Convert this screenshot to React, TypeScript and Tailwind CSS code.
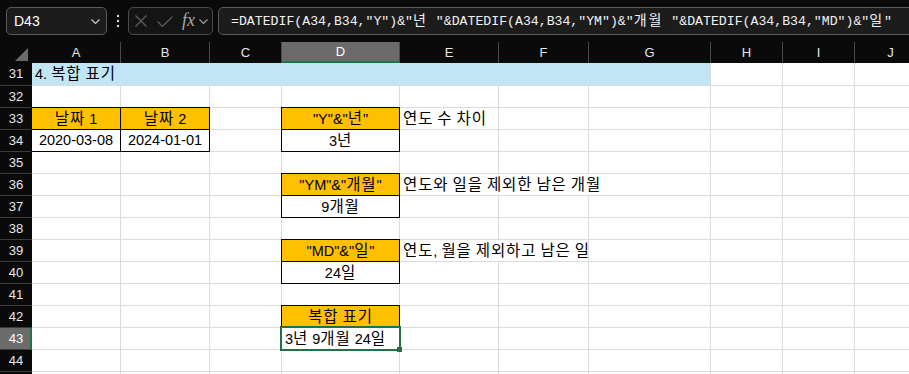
import React from "react";

type Cell = {
  col: number;
  span?: number;
  w?: string;
  text?: string;
  center?: boolean;
  fill?: string;
  boxed?: boolean;
  selected?: boolean;
};

type Row = { n: number; h?: string; label?: boolean; cells: Cell[] };

const cols = [
  { name: "A", w: "w-[89px]" },
  { name: "B", w: "w-[89px]" },
  { name: "C", w: "w-[72px]" },
  { name: "D", w: "w-[118px]" },
  { name: "E", w: "w-[99px]" },
  { name: "F", w: "w-[90px]" },
  { name: "G", w: "w-[122px]" },
  { name: "H", w: "w-[72px]" },
  { name: "I", w: "w-[72px]" },
  { name: "J", w: "w-[72px]" },
];

const orange = "bg-[#ffc000]";

const rows: Row[] = [
  {
    n: 31,
    h: "h-[23px]",
    cells: [{ col: 0, span: 7, w: "w-[679px]", text: "4. 복합 표기", fill: "bg-[#c1e5f5]" }],
  },
  { n: 32, cells: [] },
  {
    n: 33,
    cells: [
      { col: 0, text: "날짜 1", center: true, fill: orange, boxed: true },
      { col: 1, text: "날짜 2", center: true, fill: orange, boxed: true },
      { col: 3, text: '"Y"&"년"', center: true, fill: orange, boxed: true },
      { col: 4, text: "연도 수 차이" },
    ],
  },
  {
    n: 34,
    cells: [
      { col: 0, text: "2020-03-08", center: true, boxed: true },
      { col: 1, text: "2024-01-01", center: true, boxed: true },
      { col: 3, text: "3년", center: true, boxed: true },
    ],
  },
  { n: 35, cells: [] },
  {
    n: 36,
    cells: [
      { col: 3, text: '"YM"&"개월"', center: true, fill: orange, boxed: true },
      { col: 4, span: 3, w: "w-[311px]", text: "연도와 일을 제외한 남은 개월" },
    ],
  },
  { n: 37, cells: [{ col: 3, text: "9개월", center: true, boxed: true }] },
  { n: 38, cells: [] },
  {
    n: 39,
    cells: [
      { col: 3, text: '"MD"&"일"', center: true, fill: orange, boxed: true },
      { col: 4, span: 2, w: "w-[189px]", text: "연도, 월을 제외하고 남은 일" },
    ],
  },
  { n: 40, cells: [{ col: 3, text: "24일", center: true, boxed: true }] },
  { n: 41, cells: [] },
  { n: 42, cells: [{ col: 3, text: "복합 표기", center: true, fill: orange, boxed: true }] },
  { n: 43, cells: [{ col: 3, text: "3년 9개월 24일", selected: true }] },
  { n: 44, cells: [] },
  { n: 45, label: false, cells: [] },
];

const formula =
  '=DATEDIF(A34,B34,"Y")&"년 "&DATEDIF(A34,B34,"YM")&"개월 "&DATEDIF(A34,B34,"MD")&"일"';

// hangul runs get their own size so they take the room malgun gothic gives them
function Ko({ text, cls }: { text: string; cls: string }) {
  return (
    <span>
      {text.split(/([\uac00-\ud7a3]+)/).map((p, i) =>
        /[\uac00-\ud7a3]/.test(p) ? (
          <span key={i} className={cls}>
            {p}
          </span>
        ) : (
          p
        )
      )}
    </span>
  );
}

function Chevron({ color }: { color: string }) {
  return (
    <svg width="9" height="5" viewBox="0 0 9 5" fill="none">
      <polyline points="0.5,0.5 4.5,4.5 8.5,0.5" stroke={color} strokeWidth="1.1" />
    </svg>
  );
}

function TopBar() {
  return (
    <div className="h-[42px] flex items-start pt-[7px] bg-[#0a0a0a] shrink-0">
      {/* Name box */}
      <div className="ml-[6px] w-[101px] h-[28px] shrink-0 rounded-[5px] border border-[#5a5a5a] bg-[#1c1c1c] flex items-center justify-between pl-[7px] pr-[6px]">
        <span className="text-[14px] text-white font-['Liberation_Sans',sans-serif]">D43</span>
        <Chevron color="#cfcfcf" />
      </div>

      {/* dots */}
      <div className="ml-[9px] w-[4px] h-[28px] flex items-center shrink-0">
        <svg width="4" height="14" viewBox="0 0 4 14">
          <circle cx="2" cy="2" r="1.2" fill="#d6d6d6" />
          <circle cx="2" cy="7" r="1.2" fill="#d6d6d6" />
          <circle cx="2" cy="12" r="1.2" fill="#d6d6d6" />
        </svg>
      </div>

      {/* cancel / enter / fx */}
      <div className="ml-[8px] w-[85px] h-[28px] shrink-0 rounded-[5px] border border-[#4a4a4a] bg-[#141414] flex items-center pl-[6px]">
        <svg width="12" height="12" viewBox="0 0 12 12" fill="none">
          <line x1="0.5" y1="0.5" x2="11.5" y2="11.5" stroke="#5e5e5e" strokeWidth="1.2" />
          <line x1="11.5" y1="0.5" x2="0.5" y2="11.5" stroke="#5e5e5e" strokeWidth="1.2" />
        </svg>
        <svg className="ml-[10px]" width="16" height="11" viewBox="0 0 16 11" fill="none">
          <polyline points="0.5,5.5 5.5,10.5 15.5,0.5" stroke="#5e5e5e" strokeWidth="1.2" />
        </svg>
        <span className="ml-[9px] italic text-[18px] leading-none text-[#a8a8a8] font-['Liberation_Serif',serif] pb-[2px]">
          fx
        </span>
        <span className="ml-[4px] flex">
          <Chevron color="#a0a0a0" />
        </span>
      </div>

      {/* formula */}
      <div className="ml-[5px] w-[720px] h-[28px] shrink-0 rounded-[5px] border border-[#5a5a5a] bg-[#1c1c1c] flex items-center pl-[12px]">
        <span className="whitespace-nowrap text-[13.2px] text-[#f2f2f2] font-['Liberation_Mono','Noto_Sans_CJK_KR',monospace]">
          <Ko text={formula} cls="text-[14px] tracking-[2px]" />
        </span>
      </div>
    </div>
  );
}

function ColumnHeader() {
  return (
    <div className="flex h-[21px] shrink-0 bg-[#0a0a0a]">
      <div className="w-[32px] shrink-0 h-full flex items-end justify-end pr-[4px] pb-[2px]">
        <svg width="13" height="13" viewBox="0 0 13 13">
          <polygon points="13,0 13,13 0,13" fill="#6b6b6b" />
        </svg>
      </div>
      {cols.map((c) =>
        c.name === "D" ? (
          <div
            key={c.name}
            className={`${c.w} shrink-0 h-full bg-[#6b6b6b] border-b-2 border-b-[#217346] border-r border-r-[#4a4a4a] flex items-center justify-center text-[13px] text-white font-['Liberation_Sans',sans-serif]`}
          >
            {c.name}
          </div>
        ) : (
          <div
            key={c.name}
            className={`${c.w} shrink-0 h-full border-r border-[#4a4a4a] flex items-center justify-center text-[13px] text-[#e6e6e6] font-['Liberation_Sans',sans-serif]`}
          >
            {c.name}
          </div>
        )
      )}
    </div>
  );
}

function GridCell({ cell }: { cell: Cell }) {
  const w = cell.w ?? cols[cell.col].w;
  let edge = "border-[#dcdcdc]";
  if (cell.boxed) edge = "border-black shadow-[0_-1px_0_0_#000,-1px_0_0_0_#000,-1px_-1px_0_0_#000]";
  if (cell.selected)
    edge =
      "border-[#217346] relative z-10 shadow-[-2px_-2px_0_0_#217346,0_-2px_0_0_#217346,-2px_0_0_0_#217346,1px_1px_0_0_#217346,1px_0_0_0_#217346,0_1px_0_0_#217346,1px_-2px_0_0_#217346,-2px_1px_0_0_#217346]";

  return (
    <div
      className={`${w} ${edge} ${cell.fill ?? ""} ${
        cell.center ? "justify-center" : ""
      } shrink-0 h-full border-r border-b flex items-center whitespace-nowrap px-[3px] text-black`}
    >
      {cell.text && <Ko text={cell.text} cls="text-[15.5px] tracking-[0.9px]" />}
      {cell.selected && (
        <div className="absolute right-[-3px] bottom-[-3px] w-[5px] h-[5px] bg-[#217346]" />
      )}
    </div>
  );
}

function GridRow({ row }: { row: Row }) {
  const out: React.ReactNode[] = [];
  let i = 0;
  while (i < cols.length) {
    const c = row.cells.find((x) => x.col === i);
    if (c) {
      out.push(<GridCell key={i} cell={c} />);
      i += c.span ?? 1;
    } else {
      out.push(
        <div key={i} className={`${cols[i].w} shrink-0 h-full border-r border-b border-[#dcdcdc]`} />
      );
      i++;
    }
  }
  const active = row.n === 43;

  return (
    <div className={`flex shrink-0 ${row.h ?? "h-[22px]"}`}>
      <div
        className={`w-[32px] shrink-0 h-full border-b border-b-[#3d3d3d] flex items-center justify-center text-[13px] font-['Liberation_Sans',sans-serif] ${
          active
            ? "bg-[#6b6b6b] text-white border-r-2 border-r-[#217346] pl-[2px]"
            : "bg-[#0a0a0a] text-[#e3e8ee]"
        }`}
      >
        {row.label === false ? "" : row.n}
      </div>
      {out}
    </div>
  );
}

export default function App() {
  return (
    <div className="w-[909px] h-[374px] overflow-hidden bg-[#0a0a0a] flex flex-col">
      <TopBar />
      <ColumnHeader />
      <div className="bg-white flex flex-col text-[14.5px] font-['Liberation_Sans','Noto_Sans_CJK_KR',sans-serif]">
        {rows.map((r) => (
          <GridRow key={r.n} row={r} />
        ))}
      </div>
    </div>
  );
}
